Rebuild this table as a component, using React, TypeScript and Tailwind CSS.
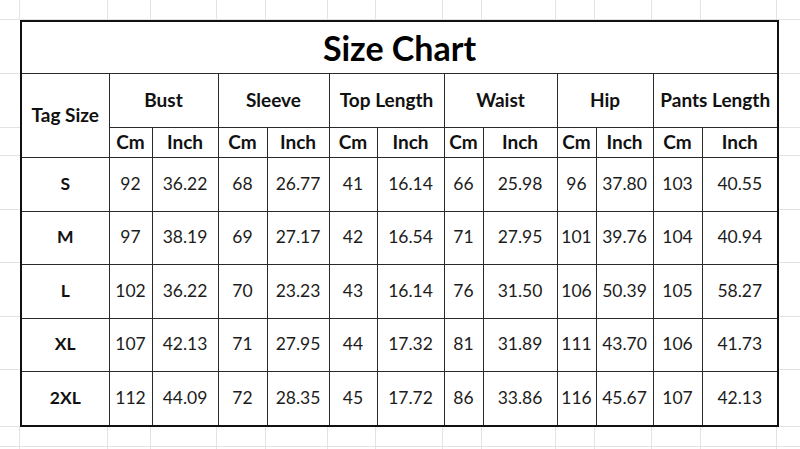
const colWidths = [
  "w-[88px]",
  "w-[43px]",
  "w-[66px]",
  "w-[49px]",
  "w-[62px]",
  "w-[48px]",
  "w-[67px]",
  "w-[39px]",
  "w-[74px]",
  "w-[39px]",
  "w-[57px]",
  "w-[49px]",
  "w-[76px]",
];

// heights of the sheet rows that sit beside the table
const sideRows = [
  "h-[54px]",
  "h-[54px]",
  "h-[28px]",
  "h-[54px]",
  "h-[53px]",
  "h-[54px]",
  "h-[53px]",
  "h-[57px]",
];

const groups = ["Bust", "Sleeve", "Top Length", "Waist", "Hip", "Pants Length"];

const rows = [
  { size: "S", h: "h-[54px]", v: ["92", "36.22", "68", "26.77", "41", "16.14", "66", "25.98", "96", "37.80", "103", "40.55"] },
  { size: "M", h: "h-[53px]", v: ["97", "38.19", "69", "27.17", "42", "16.54", "71", "27.95", "101", "39.76", "104", "40.94"] },
  { size: "L", h: "h-[54px]", v: ["102", "36.22", "70", "23.23", "43", "16.14", "76", "31.50", "106", "50.39", "105", "58.27"] },
  { size: "XL", h: "h-[53px]", v: ["107", "42.13", "71", "27.95", "44", "17.32", "81", "31.89", "111", "43.70", "106", "41.73"] },
  { size: "2XL", h: "h-[55px]", v: ["112", "44.09", "72", "28.35", "45", "17.72", "86", "33.86", "116", "45.67", "107", "42.13"] },
];

const line = "border-[#e3e3e3]";
const cell = "border border-[#2a2a2a] text-center align-middle p-0";

const SheetStrip = ({ h }: { h: string }) => (
  <div className={`flex shrink-0 ${h}`}>
    <div className={`w-[20px] shrink-0 border-r border-b ${line}`} />
    {colWidths.map((w, i) => (
      <div key={i} className={`${w} shrink-0 border-r border-b ${line}`} />
    ))}
    <div className={`flex-1 border-b ${line}`} />
  </div>
);

const Gutter = ({ w }: { w: string }) => (
  <div className={`${w} shrink-0 flex flex-col`}>
    {sideRows.map((h, i) => (
      <div key={i} className={`${h} shrink-0 border-b ${line}`} />
    ))}
  </div>
);

export default function App() {
  return (
    <div className="w-[800px] h-[449px] overflow-hidden bg-white flex flex-col font-['Lato',sans-serif] text-[#111]">
      <SheetStrip h="h-[20px]" />

      <div className="flex shrink-0 items-start h-[407px]">
        <Gutter w="w-[20px]" />
        <table className="table-fixed border-collapse border-2 border-[#111] w-[757px] h-[405px] shrink-0">
          <colgroup>
            {colWidths.map((w, i) => (
              <col key={i} className={w} />
            ))}
          </colgroup>
          <tbody>
            <tr className="h-[52px]">
              <td colSpan={13} className={`${cell} text-[34px] font-bold text-black`}>
                Size Chart
              </td>
            </tr>
            <tr className="h-[54px]">
              <td rowSpan={2} className={`${cell} text-[19px] font-bold`}>
                Tag Size
              </td>
              {groups.map((g) => (
                <td key={g} colSpan={2} className={`${cell} text-[19px] font-bold whitespace-nowrap`}>
                  {g}
                </td>
              ))}
            </tr>
            <tr className="h-[28px]">
              {groups.map((g) => [
                <td key={g + "c"} className={`${cell} text-[19px] font-bold`}>Cm</td>,
                <td key={g + "i"} className={`${cell} text-[19px] font-bold`}>Inch</td>,
              ])}
            </tr>
            {rows.map((r) => (
              <tr key={r.size} className={r.h}>
                <td className={`${cell} text-[17.5px] font-bold`}>{r.size}</td>
                {r.v.map((v, i) => (
                  <td key={i} className={`${cell} text-[17.5px] text-[#1c1c1c]`}>
                    {v}
                  </td>
                ))}
              </tr>
            ))}
          </tbody>
        </table>
        <div className="flex-1">
          <Gutter w="w-full" />
        </div>
      </div>

      <SheetStrip h="h-[20px]" />
      <SheetStrip h="h-[20px]" />
    </div>
  );
}
